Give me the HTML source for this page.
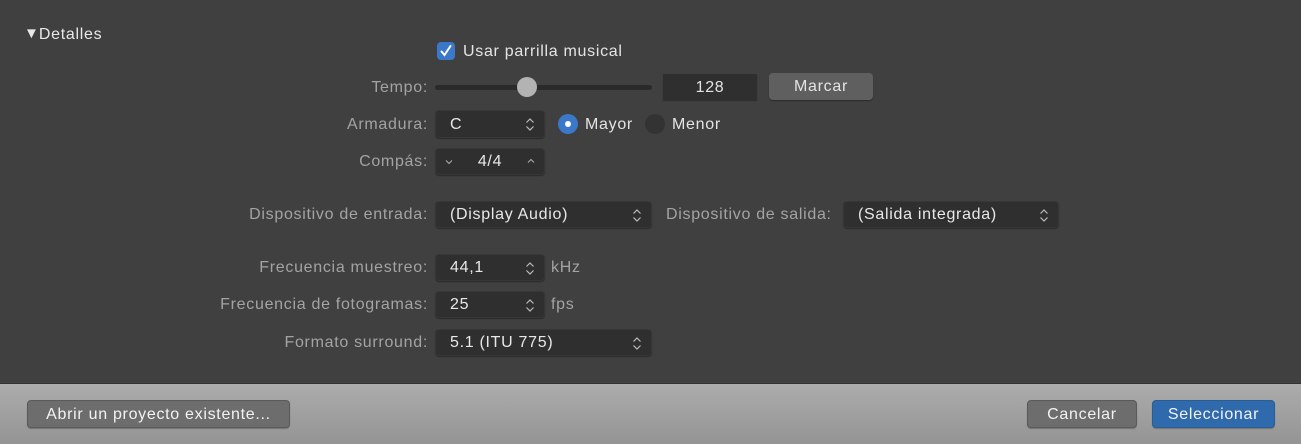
<!DOCTYPE html>
<html><head><meta charset="utf-8"><style>
*{margin:0;padding:0;box-sizing:border-box}
body{width:1301px;height:444px;background:#404040;font-family:"Liberation Sans",sans-serif;font-size:16px;letter-spacing:0.7px;color:#e4e4e4;position:relative;overflow:hidden}
.a{position:absolute;white-space:nowrap;line-height:18px}
.l{position:absolute;right:873px;color:#a3a3a3;line-height:18px;white-space:nowrap}
.p{position:absolute;background:#2f2f2f;border-radius:4px;box-shadow:0 1px 1px rgba(0,0,0,.35),inset 0 0 0 1px rgba(255,255,255,.04);color:#e8e8e8;padding-left:15px;line-height:27px}
.p svg{position:absolute;right:10px;top:7px}
.bar{position:absolute;left:0;top:383px;width:1301px;height:61px;background:linear-gradient(#acacac,#949494);border-top:1px solid #333}
.b{position:absolute;top:16px;height:28px;border-radius:4px;background:#6d6d6d;border:1px solid #5a5a5a;color:#f2f2f2;text-align:center;line-height:26px;box-shadow:0 1px 1px rgba(0,0,0,.25)}
</style></head><body>
<div class="a" style="left:24px;top:26px;color:#e8e8e8"><span style="font-size:15px;position:relative;top:-1px;letter-spacing:0">▼</span>Detalles</div>
<div style="position:absolute;left:437px;top:42px;width:18px;height:18px;border-radius:4px;background:#3b78c9"><svg width="18" height="18"><path d="M4.5 9.5l3 3.5 6-9" stroke="#fff" stroke-width="2" fill="none" stroke-linecap="round"/></svg></div>
<div class="a" style="left:463px;top:43px">Usar parrilla musical</div>

<div class="l" style="top:79px">Tempo:</div>
<div style="position:absolute;left:435px;top:85px;width:217px;height:5px;border-radius:3px;background:#2a2a2a"></div>
<div style="position:absolute;left:517px;top:77px;width:20px;height:20px;border-radius:50%;background:#b3b3b3"></div>
<div style="position:absolute;left:663px;top:74px;width:94px;height:26px;background:#2f2f2f;box-shadow:0 1px 1px rgba(0,0,0,.3);text-align:center;line-height:27px">128</div>
<div style="position:absolute;left:769px;top:73px;width:104px;height:27px;background:#5f5f5f;border-radius:4px;text-align:center;line-height:28px;box-shadow:0 1px 1px rgba(0,0,0,.35)">Marcar</div>

<div class="l" style="top:116px">Armadura:</div>
<div class="p" style="left:435px;top:110px;width:110px;height:28px;line-height:29px">C<svg width="10" height="15"><path d="M1.5 5.5L5 2l3.5 3.5M1.5 9.5L5 13l3.5-3.5" stroke="#bbb" stroke-width="1.2" fill="none"/></svg></div>
<div style="position:absolute;left:558px;top:114px;width:20px;height:20px;border-radius:50%;background:#3b78c9"><div style="position:absolute;left:7px;top:7px;width:6px;height:6px;border-radius:50%;background:#fff"></div></div>
<div class="a" style="left:585px;top:116px">Mayor</div>
<div style="position:absolute;left:645px;top:114px;width:20px;height:20px;border-radius:50%;background:#333"></div>
<div class="a" style="left:672px;top:116px">Menor</div>

<div class="l" style="top:153px">Compás:</div>
<div class="p" style="left:435px;top:148px;width:110px;height:27px;padding:0;text-align:center;line-height:28px">4/4
<svg style="left:9px;right:auto;top:11px" width="10" height="6"><path d="M2 1.5l3 3 3-3" stroke="#aaa" stroke-width="1.1" fill="none"/></svg>
<svg style="right:9px;top:10px" width="10" height="6"><path d="M2 4.5l3-3 3 3" stroke="#aaa" stroke-width="1.1" fill="none"/></svg></div>

<div class="l" style="top:206px">Dispositivo de entrada:</div>
<div class="p" style="left:435px;top:201px;width:217px;height:27px;line-height:28px">(Display Audio)<svg width="10" height="15"><path d="M1.5 5.5L5 2l3.5 3.5M1.5 9.5L5 13l3.5-3.5" stroke="#bbb" stroke-width="1.2" fill="none"/></svg></div>
<div class="a" style="left:666px;top:206px;color:#a3a3a3">Dispositivo de salida:</div>
<div class="p" style="left:843px;top:201px;width:216px;height:27px;line-height:28px">(Salida integrada)<svg width="10" height="15"><path d="M1.5 5.5L5 2l3.5 3.5M1.5 9.5L5 13l3.5-3.5" stroke="#bbb" stroke-width="1.2" fill="none"/></svg></div>

<div class="l" style="top:259px">Frecuencia muestreo:</div>
<div class="p" style="left:435px;top:254px;width:110px;height:27px;line-height:28px">44,1<svg width="10" height="15"><path d="M1.5 5.5L5 2l3.5 3.5M1.5 9.5L5 13l3.5-3.5" stroke="#bbb" stroke-width="1.2" fill="none"/></svg></div>
<div class="a" style="left:551px;top:259px;color:#a3a3a3">kHz</div>

<div class="l" style="top:296px">Frecuencia de fotogramas:</div>
<div class="p" style="left:435px;top:291px;width:110px;height:27px;line-height:28px">25<svg width="10" height="15"><path d="M1.5 5.5L5 2l3.5 3.5M1.5 9.5L5 13l3.5-3.5" stroke="#bbb" stroke-width="1.2" fill="none"/></svg></div>
<div class="a" style="left:551px;top:296px;color:#a3a3a3">fps</div>

<div class="l" style="top:334px">Formato surround:</div>
<div class="p" style="left:435px;top:329px;width:217px;height:27px;line-height:28px">5.1 (ITU 775)<svg width="10" height="15"><path d="M1.5 5.5L5 2l3.5 3.5M1.5 9.5L5 13l3.5-3.5" stroke="#bbb" stroke-width="1.2" fill="none"/></svg></div>

<div class="bar">
<div class="b" style="left:27px;width:263px;line-height:27px">Abrir un proyecto existente...</div>
<div class="b" style="left:1027px;width:110px;line-height:27px">Cancelar</div>
<div class="b" style="left:1152px;width:123px;background:#2f6aad;border-color:#2a5c96;line-height:27px">Seleccionar</div>
</div>
</body></html>
